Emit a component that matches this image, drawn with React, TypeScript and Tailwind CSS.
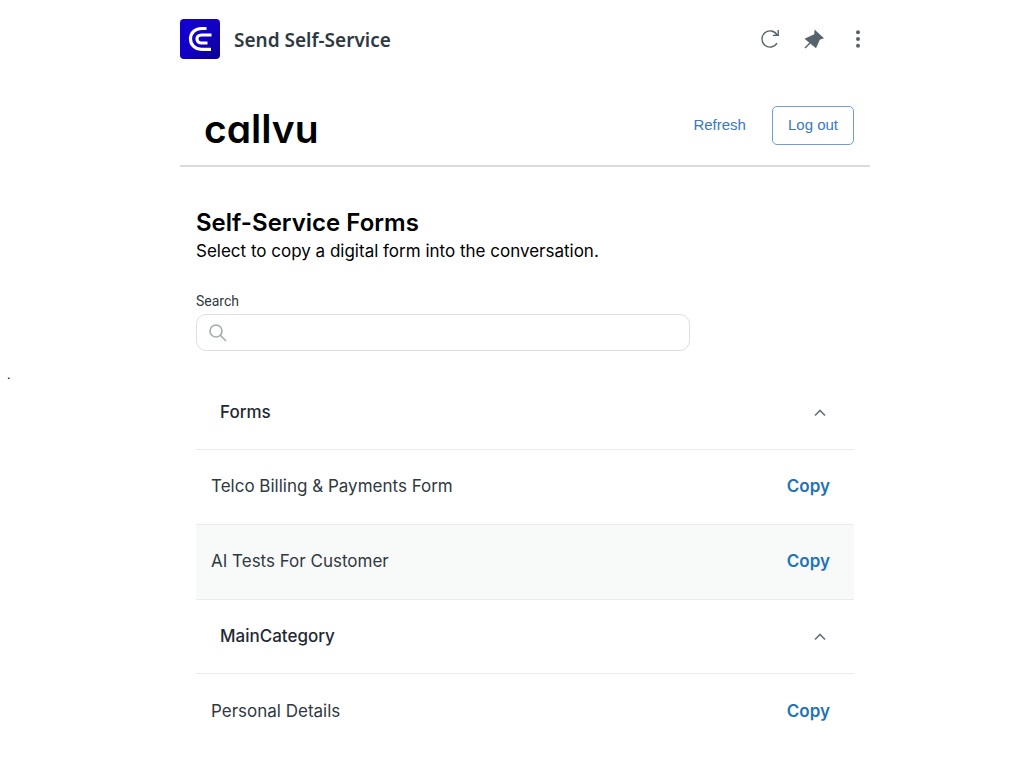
import { useState } from 'react';
import type { ReactNode } from 'react';

type Category = {
  name: string;
  forms: string[];
};

const categories: Category[] = [
  { name: 'Forms', forms: ['Telco Billing & Payments Form', 'AI Tests For Customer'] },
  { name: 'MainCategory', forms: ['Personal Details'] },
];

const HIGHLIGHTED = 'AI Tests For Customer';

function AppIcon() {
  return (
    <svg width="40" height="40" viewBox="0 0 40 40" aria-hidden="true">
      <defs>
        <linearGradient id="app-icon" x1="0" y1="0" x2="1" y2="1">
          <stop offset="0" stopColor="#1400d2" />
          <stop offset="0.5" stopColor="#1200c4" />
          <stop offset="1" stopColor="#0c0090" />
        </linearGradient>
      </defs>
      <rect width="40" height="40" rx="4" fill="url(#app-icon)" />
      <path
        d="M26.5 9.5H21.5C14.5 9.5 10.5 14.5 10.5 20S14.5 30.3 21.5 30.3H31M31.5 16H21.5C15.5 16 15.5 24 21.5 24H27.5"
        fill="none"
        stroke="#fff"
        strokeWidth="3.2"
      />
    </svg>
  );
}

function IconButton({ label, children }: { label: string; children: ReactNode }) {
  return (
    <button type="button" aria-label={label} className="flex h-6 w-6 items-center justify-center text-[#56636b]">
      {children}
    </button>
  );
}

export default function App() {
  const [query, setQuery] = useState('');
  const [closed, setClosed] = useState<string[]>([]);

  const toggle = (name: string) =>
    setClosed((prev) => (prev.includes(name) ? prev.filter((n) => n !== name) : [...prev, name]));

  return (
    <div className="flex min-h-screen items-center bg-white font-['Inter',sans-serif] text-black">
      <span className="w-[26px] pb-5 pl-[7px] text-xs">.</span>
      <div className="mx-auto w-full max-w-[690px] self-start pt-[19px]">
        <header className="flex items-center justify-between">
          <div className="flex items-center gap-[14px]">
            <AppIcon />
            <h1 className="pt-0.5 font-['Noto_Sans',sans-serif] text-[19px] font-semibold text-[#2f3941]">
              Send Self-Service
            </h1>
          </div>
          <div className="flex items-center gap-5">
            <IconButton label="Reload">
              <svg width="20" height="20" viewBox="0 0 20 20" fill="none" stroke="currentColor" strokeWidth="1.4">
                <path d="M17 14.2A8.1 8.1 0 1 1 17 5.8M18.2 1V6.4H12.8" />
              </svg>
            </IconButton>
            <IconButton label="Pin">
              <svg width="20" height="20" viewBox="0 0 20 20" fill="currentColor">
                <path d="M10.5 0.5L20 9.3L15.8 10.8L12 19.2L0.5 9.8L10.3 5.2Z" />
                <path d="M6 14L1 19" stroke="currentColor" strokeWidth="1.5" />
              </svg>
            </IconButton>
            <IconButton label="More options">
              <svg width="6" height="20" viewBox="0 0 6 20" fill="currentColor">
                <circle cx="3" cy="3.2" r="2" />
                <circle cx="3" cy="10" r="2" />
                <circle cx="3" cy="16.8" r="2" />
              </svg>
            </IconButton>
          </div>
        </header>

        <div className="mt-[26px] flex h-[82px] items-center justify-between border-b-2 border-[#d8dcde] pr-4 pl-6">
          <span className="pt-2 text-[39px] leading-10 font-semibold [font-feature-settings:'cv11']">callvu</span>
          <div className="flex items-center gap-[26px] font-['Liberation_Sans',sans-serif] text-[15px] text-[#3a78c0]">
            <a href="#refresh">Refresh</a>
            <button type="button" className="h-[39px] rounded-[5px] border border-[#6d9fd6] px-[15px]">
              Log out
            </button>
          </div>
        </div>

        <main className="px-4 pt-10">
          <h2 className="text-2xl leading-8 font-semibold">Self-Service Forms</h2>
          <p className="text-[17px] leading-6">Select to copy a digital form into the conversation.</p>

          <label htmlFor="search" className="mt-7 block font-['Roboto',sans-serif] text-sm text-[#2f3941]">
            Search
          </label>
          <div className="mt-[3px] flex h-[37px] w-3/4 items-center rounded-[10px] border border-[#dcdfe4] px-3">
            <svg width="18" height="18" viewBox="0 0 18 18" fill="none" stroke="#a4abb0" strokeWidth="1.6">
              <circle cx="7" cy="7" r="6" />
              <path d="M11.3 11.3L17 17" />
            </svg>
            <input
              id="search"
              type="text"
              value={query}
              onChange={(e) => setQuery(e.target.value)}
              className="ml-2 min-w-0 flex-1 bg-transparent text-sm outline-none"
            />
          </div>

          <div className="mt-[25px] pb-5 text-[17px]">
            {categories.map((category) => {
              const open = !closed.includes(category.name);
              const forms = category.forms.filter((f) => f.toLowerCase().includes(query.toLowerCase()));

              return (
                <section key={category.name} className="group">
                  <button
                    type="button"
                    aria-expanded={open}
                    onClick={() => toggle(category.name)}
                    className="flex h-[74px] w-full items-center justify-between border-b border-[#e9ebed] pr-7 pl-6 font-medium text-[#1f2933]"
                  >
                    {category.name}
                    <svg
                      width="12"
                      height="8"
                      viewBox="0 0 12 8"
                      fill="none"
                      stroke="#68737d"
                      strokeWidth="1.6"
                      className={open ? '' : 'rotate-180'}
                    >
                      <path d="M1 6.5L6 1.5L11 6.5" />
                    </svg>
                  </button>
                  {open && (
                    <ul>
                      {forms.map((form) => (
                        <li
                          key={form}
                          className={`flex h-[75px] items-center justify-between border-b border-[#e9ebed] pr-6 pl-[15px] text-[#2f3941] group-last:last:border-b-0 ${
                            form === HIGHLIGHTED ? 'bg-[#f8f9f9]' : ''
                          }`}
                        >
                          {form}
                          <button type="button" className="font-semibold text-[#1f73b7]">
                            Copy
                          </button>
                        </li>
                      ))}
                    </ul>
                  )}
                </section>
              );
            })}
          </div>
        </main>
      </div>
    </div>
  );
}
